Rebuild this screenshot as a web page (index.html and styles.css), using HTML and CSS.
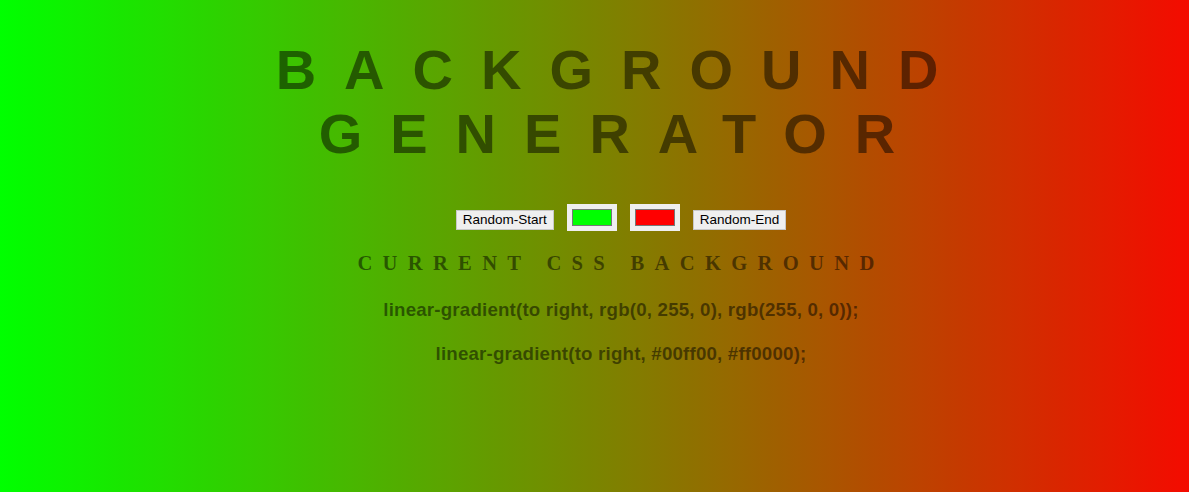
FILE: index.html
```html
<!DOCTYPE html>
<html>
<head>
<meta charset="utf-8">
<title>Background Generator</title>
<link rel="stylesheet" href="styles.css">
</head>
<body class="page">
  <main class="wrap">
    <h1 class="title">Background Generator</h1>
    <div class="controls">
      <button class="btn" type="button">Random-Start</button>
      <input class="swatch" type="color" value="#00ff00">
      <input class="swatch" type="color" value="#ff0000">
      <button class="btn" type="button">Random-End</button>
    </div>
    <h2 class="subtitle">Current CSS Background</h2>
    <h3 class="code">linear-gradient(to right, rgb(0, 255, 0), rgb(255, 0, 0));</h3>
    <h3 class="code">linear-gradient(to right, #00ff00, #ff0000);</h3>
  </main>
</body>
</html>
```
FILE: styles.css
```css
html {
  min-height: 100%;
  background-image: linear-gradient(to right, #00ff00, #ff0000);
  background-size: 1242px 100%;
  background-repeat: repeat-y;
  background-color: #ff0000;
}

.page {
  margin: 0;
  padding: 0 8px;
  color: rgba(0, 0, 0, 0.5);
  text-align: center;
}

.wrap {
  padding-left: 53px;
}

.title {
  font: 700 56px/1.149 "Liberation Sans", Arial, sans-serif;
  letter-spacing: 0.5em;
  text-transform: uppercase;
  margin: 0 0 37.5px;
  padding-top: 37.5px;
}

.controls {
  display: flex;
  justify-content: center;
  align-items: flex-end;
  gap: 13px;
}

.btn {
  font: 13.5px "Liberation Sans", Arial, sans-serif;
  color: #000;
  background: #efefef;
  border: 1px solid #c8c8c8;
  border-radius: 0;
  padding: 1px 6px;
  height: 20px;
  margin: 0 0 1px;
  line-height: 16px;
}

.swatch {
  -webkit-appearance: none;
  appearance: none;
  width: 50px;
  height: 27px;
  padding: 5px;
  margin: 0;
  border: none;
  background: #efefef;
  box-sizing: border-box;
}

.swatch::-webkit-color-swatch-wrapper {
  padding: 0;
}

.swatch::-webkit-color-swatch {
  border: 1px solid #777;
}

.subtitle {
  font: 700 20.6px/1.149 "Liberation Serif", "Times New Roman", serif;
  letter-spacing: 0.5em;
  text-transform: uppercase;
  margin: 21px 0 24px;
}

.code {
  font: 700 18.72px/1.149 "Liberation Sans", Arial, sans-serif;
  letter-spacing: 0.01em;
  margin: 0 0 22px;
}
```
